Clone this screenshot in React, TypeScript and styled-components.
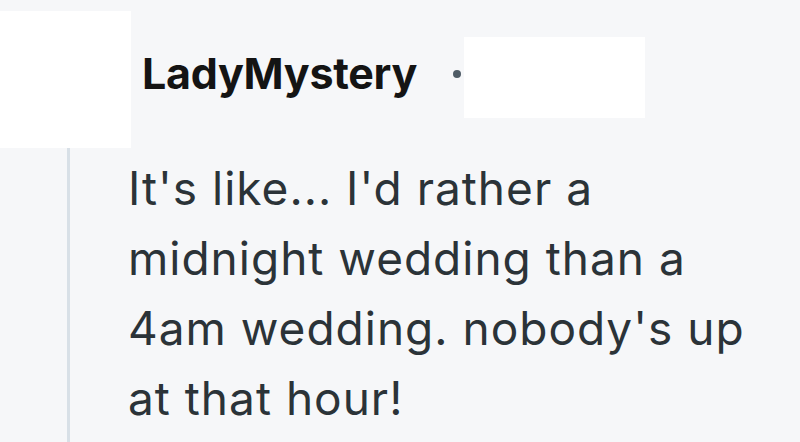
import React from "react";
import styled, { createGlobalStyle } from "styled-components";

const Global = createGlobalStyle`
  html, body { margin: 0; padding: 0; background: #f6f7f9; }
  body { width: 800px; height: 442px; overflow: hidden; }
`;

const Page = styled.div`
  width: 800px;
  height: 442px;
  background: #f6f7f9;
  padding-top: 11px;
  box-sizing: border-box;
  display: flex;
  flex-direction: column;
  font-family: Inter, "Liberation Sans", sans-serif;
`;

const Header = styled.div`
  display: flex;
  align-items: flex-start;
  height: 137px;
  flex-shrink: 0;
`;

const Avatar = styled.div`
  width: 131px;
  height: 137px;
  background: #ffffff;
  flex-shrink: 0;
`;

const Username = styled.div`
  margin-left: 11px;
  margin-top: 36px;
  font-size: 43px;
  font-weight: 700;
  color: #141414;
  line-height: 52px;
  letter-spacing: -0.3px;
`;

const Dot = styled.div`
  width: 8px;
  height: 8px;
  border-radius: 50%;
  background: #4f5c66;
  margin-left: 36px;
  margin-top: 59px;
  flex-shrink: 0;
`;

const Redacted = styled.div`
  width: 181px;
  height: 81px;
  background: #ffffff;
  margin-left: 3px;
  margin-top: 26px;
`;

const Body = styled.div`
  display: flex;
  flex: 1;
`;

const Rail = styled.div`
  width: 3px;
  margin-left: 67px;
  background: #d8e0e7;
  flex-shrink: 0;
`;

const Text = styled.p`
  margin: 0;
  padding: 5px 0 0 58px;
  font-size: 46px;
  line-height: 70px;
  letter-spacing: 1px;
  color: #2b3338;
  font-weight: 400;
  width: 680px;
`;

export default function App() {
  return (
    <>
      <Global />
      <Page>
        <Header>
          <Avatar />
          <Username>LadyMystery</Username>
          <Dot />
          <Redacted />
        </Header>
        <Body>
          <Rail />
          <Text>
            It's like... I'd rather a<br />
            midnight wedding than a<br />
            4am wedding. nobody's up<br />
            at that hour!
          </Text>
        </Body>
      </Page>
    </>
  );
}
